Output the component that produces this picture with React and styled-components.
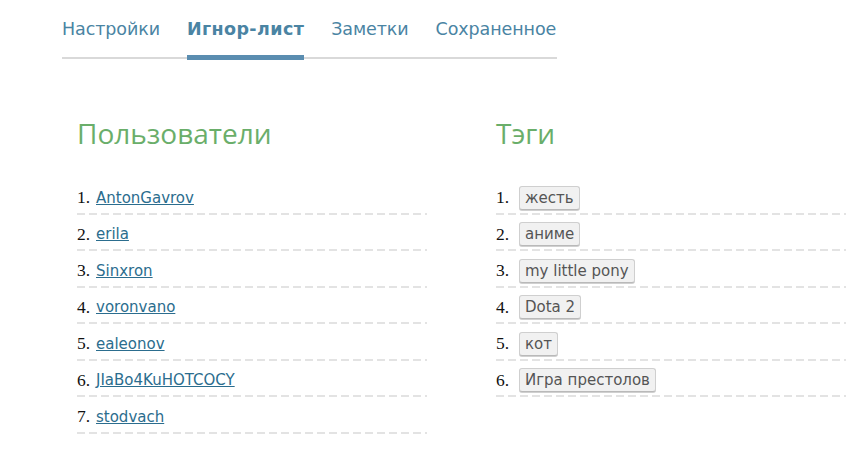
import React from 'react'
import styled, { createGlobalStyle } from 'styled-components'

const GlobalStyle = createGlobalStyle`
  body {
    margin: 0;
    background: #fff;
    font-family: "DejaVu Sans", Verdana, sans-serif;
  }
`

const users = ['AntonGavrov', 'erila', 'Sinxron', 'voronvano', 'ealeonov', 'JIaBo4KuHOTCOCY', 'stodvach']
const tags = ['жесть', 'аниме', 'my little pony', 'Dota 2', 'кот', 'Игра престолов']
const tabs = ['Настройки', 'Игнор-лист', 'Заметки', 'Сохраненное']

export default function App() {
    return (
        <Page>
            <GlobalStyle />
            <Nav>
                {tabs.map(t =>
                    <Tab key={t} active={t === 'Игнор-лист'}>{t}</Tab>
                )}
            </Nav>
            <Columns>
                <Column>
                    <Heading>Пользователи</Heading>
                    <List>
                        {users.map((u, i) =>
                            <Row key={u}>
                                <Num>{i + 1}.</Num>
                                <UserLink href="#">{u}</UserLink>
                            </Row>
                        )}
                    </List>
                </Column>
                <Column>
                    <Heading>Тэги</Heading>
                    <List>
                        {tags.map((t, i) =>
                            <Row key={t}>
                                <Num wide>{i + 1}.</Num>
                                <Tag>{t}</Tag>
                            </Row>
                        )}
                    </List>
                </Column>
            </Columns>
        </Page>
    )
}

const Page = styled.div`
padding: 17px 0 0 62px;
`

const Nav = styled.nav`
display: flex;
gap: 27px;
width: 495px;
border-bottom: 2px solid #d9d9d9;
`

const Tab = styled.div`
position: relative;
white-space: nowrap;
font-size: 17.5px;
line-height: 24px;
padding-bottom: 16px;
color: #4a84a3;
font-weight: ${p => p.active ? 'bold' : 'normal'};
letter-spacing: ${p => p.active ? '0.4px' : '-0.1px'};
cursor: pointer;
&::after {
    content: "";
    display: ${p => p.active ? 'block' : 'none'};
    position: absolute;
    left: 0;
    right: 0;
    bottom: -3px;
    height: 5px;
    background: #5a8db0;
}
`

const Columns = styled.div`
display: grid;
grid-template-columns: 350px 350px;
column-gap: 69px;
padding-left: 15px;
margin-top: 56px;
`

const Column = styled.section``

const Heading = styled.h2`
margin: 0 0 27px;
font-family: "Open Sans", sans-serif;
font-weight: 400;
font-size: 28px;
line-height: 36px;
color: #6aae6a;
`

const List = styled.div``

const Row = styled.div`
display: flex;
align-items: center;
height: 36.5px;
padding: 5px 0 2px;
box-sizing: border-box;
background: repeating-linear-gradient(to right, #e3e3e3 0 8px, transparent 8px 12px) left bottom / 100% 2px no-repeat;
`

const Num = styled.span`
font-family: "Liberation Serif", serif;
font-size: 17.5px;
color: #111;
width: ${p => p.wide ? '23px' : '19px'};
`

const UserLink = styled.a`
font-size: 15px;
color: #2b6d8e;
text-decoration: underline;
`

const Tag = styled.span`
display: inline-block;
font-size: 15px;
line-height: 18px;
padding: 2px 5px;
color: #555;
background: #f1f1f1;
border: 1px solid #cfcfcf;
border-bottom-color: #b9b9b9;
border-radius: 3px;
box-shadow: 0 1px 0 #d0d0d0;
`
